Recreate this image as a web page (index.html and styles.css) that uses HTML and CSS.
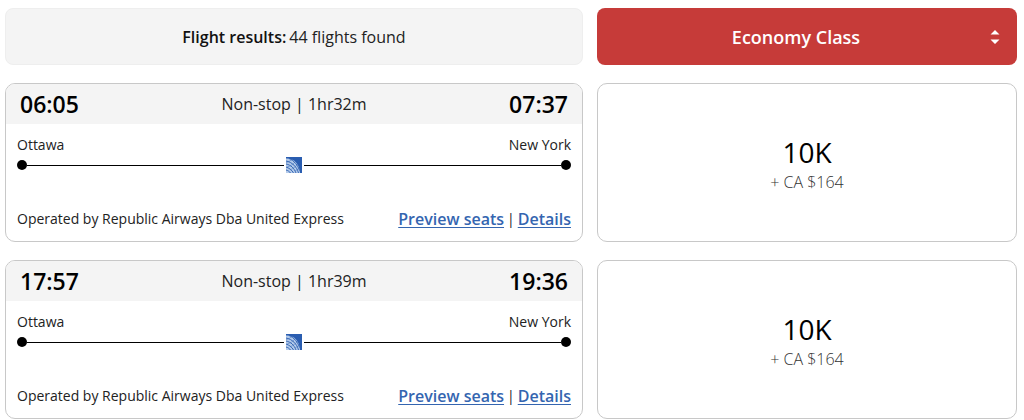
FILE: index.html
```html
<!DOCTYPE html>
<html lang="en">
<head>
<meta charset="utf-8">
<meta name="viewport" content="width=device-width, initial-scale=1">
<title>Flight results</title>
<link rel="stylesheet" href="styles.css">
</head>
<body>
<svg class="sprite" aria-hidden="true">
  <symbol id="globe" viewBox="0 0 16 16">
    <rect width="16" height="16" fill="#2a5db0"/>
    <path d="M0 1.500C7 1 13.500 6 14 16H0z" fill="#b4cbea"/>
    <g fill="none" stroke="#2a5db0" stroke-width=".9">
      <path d="M0 4C6 5 11 10 12.500 16M0 7c5 1 8 4 10 9M0 10c3 1 6 3 7.500 6M0 13c2 .5 3.500 1.500 4.500 3M3 1.500c5 2 9 7 10.500 12"/>
      <path d="M0 5.500C3 5 5 3.500 6 2M1 10c4-1 7-3 8.500-6M4 13c4-2 6-4 8-6M9 14c2-1 3-2 4.500-3.500" stroke-width=".4"/>
    </g>
  </symbol>
</svg>
<main class="results">
  <header class="summary"><strong class="summary-label">Flight results:</strong> 44 flights found</header>
  <div class="cabin">
    <select class="cabin-select" aria-label="Cabin class">
      <option>Economy Class</option>
    </select>
    <svg class="cabin-icon" viewBox="0 0 10 16" aria-hidden="true"><path d="M.5 5.500 5 1l4.500 4.500zM.5 10.500h9L5 15z" fill="#fff"/></svg>
  </div>

  <article class="flight">
    <div class="flight-head">
      <time class="time">06:05</time>
      <span class="duration">Non-stop | 1hr32m</span>
      <time class="time">07:37</time>
    </div>
    <div class="flight-body">
      <div class="cities"><span>Ottawa</span><span>New York</span></div>
      <div class="route">
        <span class="dot"></span><span class="line"></span>
        <svg class="carrier" role="img" aria-label="United"><use href="#globe"/></svg>
        <span class="line"></span><span class="dot"></span>
      </div>
      <div class="flight-foot">
        <span>Operated by Republic Airways Dba United Express</span>
        <span class="links"><a class="link" href="#">Preview seats</a><span>|</span><a class="link" href="#">Details</a></span>
      </div>
    </div>
  </article>
  <button class="fare" type="button"><span class="points">10K</span><span class="cash">+ CA $164</span></button>

  <article class="flight">
    <div class="flight-head">
      <time class="time">17:57</time>
      <span class="duration">Non-stop | 1hr39m</span>
      <time class="time">19:36</time>
    </div>
    <div class="flight-body">
      <div class="cities"><span>Ottawa</span><span>New York</span></div>
      <div class="route">
        <span class="dot"></span><span class="line"></span>
        <svg class="carrier" role="img" aria-label="United"><use href="#globe"/></svg>
        <span class="line"></span><span class="dot"></span>
      </div>
      <div class="flight-foot">
        <span>Operated by Republic Airways Dba United Express</span>
        <span class="links"><a class="link" href="#">Preview seats</a><span>|</span><a class="link" href="#">Details</a></span>
      </div>
    </div>
  </article>
  <button class="fare" type="button"><span class="points">10K</span><span class="cash">+ CA $164</span></button>
</main>
</body>
</html>
```
FILE: styles.css
```css
* {
  box-sizing: border-box;
}

body {
  margin: 0;
  background: #fff;
  color: #222;
  font-family: "Open Sans", "Noto Sans", sans-serif;
  font-size: 14px;
  line-height: 20px;
}

.sprite {
  position: absolute;
  width: 0;
  height: 0;
}

.results {
  display: grid;
  grid-template-columns: 578fr 420fr;
  gap: 18px 14px;
  padding: 8px 7px 0 5px;
}

.summary {
  display: flex;
  align-items: center;
  justify-content: center;
  gap: 3px;
  min-height: 57px;
  border: 1px solid #eee;
  border-radius: 8px;
  background: #f4f4f4;
  font-size: 16px;
}

.summary-label {
  color: #111;
  font-weight: 600;
}

.cabin {
  position: relative;
  display: grid;
}

.cabin-select {
  appearance: none;
  width: 100%;
  padding: 0 36px 0 14px;
  border: 0;
  border-radius: 8px;
  background: #c63b39;
  color: #fff;
  font: 600 18px "Open Sans", "Noto Sans", sans-serif;
  text-align-last: center;
}

.cabin-icon {
  position: absolute;
  top: 50%;
  right: 17px;
  width: 10px;
  height: 16px;
  transform: translateY(-50%);
  pointer-events: none;
}

.flight,
.fare {
  border: 1px solid #c8c8c8;
  border-radius: 10px;
  background: #fff;
}

.flight {
  overflow: hidden;
}

.flight-head {
  display: flex;
  align-items: center;
  justify-content: space-between;
  height: 40px;
  padding: 0 14px;
  background: #f4f4f4;
}

.time {
  color: #000;
  font-size: 23px;
  font-weight: 600;
}

.duration {
  font-size: 16px;
}

.flight-body {
  padding: 11px 11px 12px;
}

.cities,
.flight-foot {
  display: flex;
  align-items: center;
  justify-content: space-between;
}

.route {
  display: flex;
  align-items: center;
  height: 20px;
}

.dot {
  width: 10px;
  height: 10px;
  border-radius: 50%;
  background: #000;
}

.line {
  flex: 1;
  height: 1px;
  background: #000;
}

.carrier {
  width: 16px;
  height: 16px;
  margin: 0 2px;
}

.flight-foot {
  margin-top: 34px;
}

.links {
  display: flex;
  gap: 3px;
}

.link {
  color: #3465b0;
  font-size: 16px;
  font-weight: 600;
  text-underline-offset: 2px;
}

.fare {
  display: flex;
  flex-direction: column;
  align-items: center;
  justify-content: center;
  gap: 4px;
  padding: 2px 0 0;
  font-family: inherit;
}

.points {
  color: #000;
  font-size: 28px;
  line-height: 32px;
}

.cash {
  color: #333;
  font-size: 16px;
  font-weight: 300;
  line-height: 20px;
}
```
